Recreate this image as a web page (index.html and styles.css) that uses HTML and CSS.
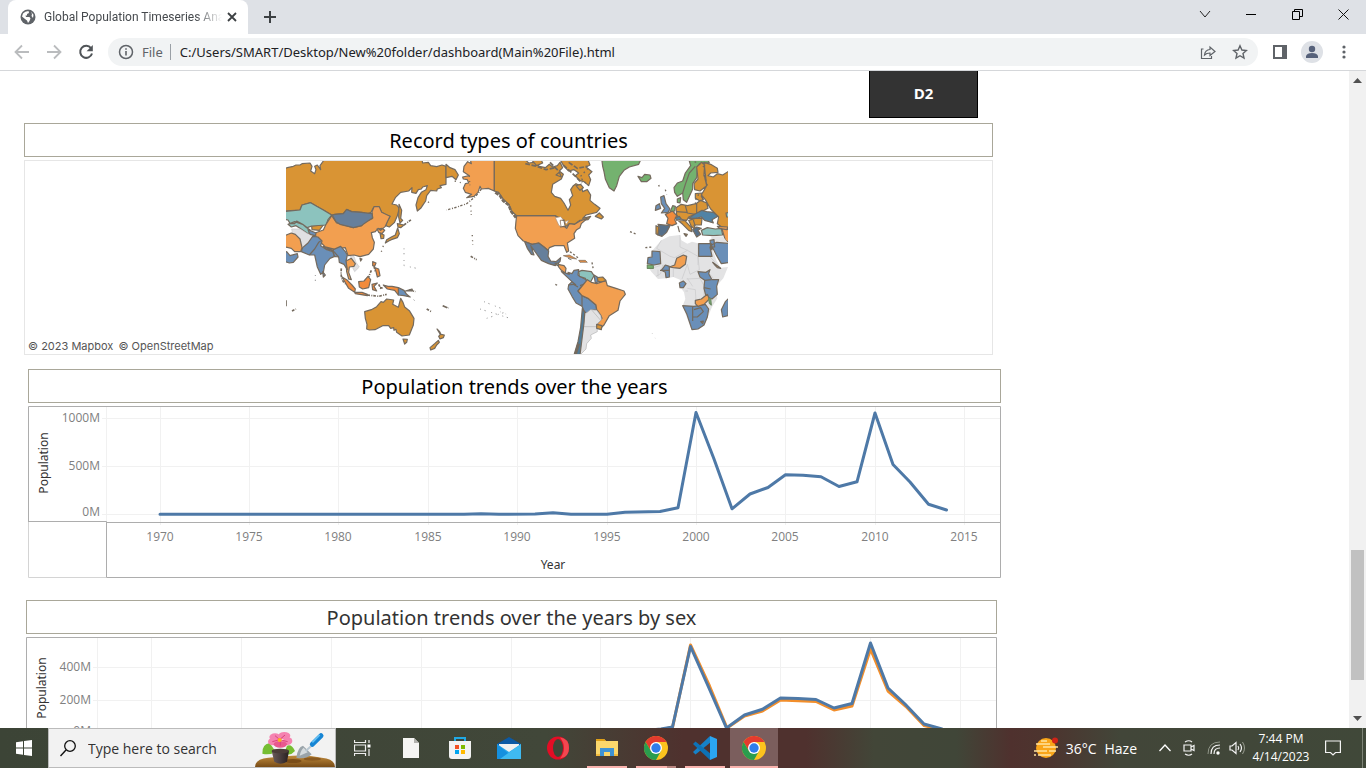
FILE: index.html
```html
<!DOCTYPE html>
<html lang="en">
<head>
<meta charset="utf-8">
<title>Global Population Timeseries Analysis</title>
<link rel="stylesheet" href="styles.css">
</head>
<body>
<div class="screen">
  <header class="tabstrip">
    <div class="tab">
      <svg class="tab-icon" viewBox="0 0 16 16"><circle cx="8" cy="8" r="7.500" fill="#5f6368"/><path d="M3 4.500Q5 2 8.500 2L9 4 7 5v1.500H5.500L6 8h3.500l1 1.500L9.500 12 8 14 7 11.500 5 10 2 7.500zM11 2.800l2.500 3-.5 3.200-1.500-2L12 5z" fill="#fff"/></svg>
      <span class="tab-title">Global Population Timeseries Analysis</span>
      <button class="icon-btn tab-close" aria-label="Close tab"><svg width="10" height="10" viewBox="0 0 10 10"><path d="M1 1l8 8M9 1L1 9" stroke="#3c4043" stroke-width="1.800"/></svg></button>
    </div>
    <button class="icon-btn new-tab" aria-label="New tab"><svg width="12" height="12" viewBox="0 0 12 12"><path d="M6 0v12M0 6h12" stroke="#3c4043" stroke-width="2"/></svg></button>
    <div class="window-controls">
      <button class="icon-btn" aria-label="Search tabs"><svg width="12" height="12" viewBox="0 0 12 12"><path d="M1 3l5 6 5-6" fill="none" stroke="#222"/></svg></button>
      <button class="icon-btn" aria-label="Minimize"><svg width="10" height="10" viewBox="0 0 10 10"><path d="M0 5.500h10" stroke="#000"/></svg></button>
      <button class="icon-btn" aria-label="Restore"><svg width="11" height="11" viewBox="0 0 11 11"><path d="M.5 2.500h7v8h-7zM2.500 2.500v-2h8v7h-3" fill="none" stroke="#000"/></svg></button>
      <button class="icon-btn" aria-label="Close window"><svg width="11" height="11" viewBox="0 0 11 11"><path d="M.5.5l10 10M10.500.5l-10 10" stroke="#111"/></svg></button>
    </div>
  </header>
  <nav class="toolbar">
    <button class="icon-btn nav-btn" aria-label="Back"><svg width="16" height="16" viewBox="0 0 16 16"><path d="M15 8H2M8 1.500L1.500 8 8 14.500" fill="none" stroke="#babcbe" stroke-width="1.800"/></svg></button>
    <button class="icon-btn nav-btn" aria-label="Forward"><svg width="16" height="16" viewBox="0 0 16 16"><path d="M1 8h13M8 1.500L14.500 8 8 14.500" fill="none" stroke="#babcbe" stroke-width="1.800"/></svg></button>
    <button class="icon-btn nav-btn" aria-label="Reload"><svg width="16" height="16" viewBox="0 0 16 16"><path d="M13 4.200A6 6 0 1 0 14 9.500" fill="none" stroke="#505458" stroke-width="2"/><path d="M14.800 1v6.200H8.600z" fill="#505458"/></svg></button>
    <div class="omnibox">
      <svg class="info" width="16" height="16" viewBox="0 0 16 16"><circle cx="8" cy="8" r="6.500" fill="none" stroke="#5f6368" stroke-width="1.500"/><path d="M8 7v4.500M8 4.200v1.600" stroke="#5f6368" stroke-width="1.600"/></svg>
      <label class="scheme" for="url">File</label>
      <input id="url" class="url" type="text" value="C:/Users/SMART/Desktop/New%20folder/dashboard(Main%20File).html">
      <button class="icon-btn box-btn" aria-label="Share"><svg width="16" height="16" viewBox="0 0 16 16"><path d="M3.500 5H1.500v9.500h10V12M4.500 11q.5-5 5.500-5.500V3l5 4.500-5 4V9Q6.500 9 4.500 11z" fill="none" stroke="#5f6368" stroke-width="1.200"/></svg></button>
      <button class="icon-btn box-btn" aria-label="Bookmark"><svg width="16" height="16" viewBox="0 0 16 16"><path d="M8 1.800l1.900 4.200 4.500.5L11 9.500l1 4.600-4-2.400-4 2.400 1-4.600-3.400-3 4.500-.5z" fill="none" stroke="#5f6368" stroke-width="1.400"/></svg></button>
    </div>
    <button class="icon-btn nav-btn" aria-label="Side panel"><svg width="14" height="14" viewBox="0 0 14 14"><path d="M1 1h12v12H1z" fill="none" stroke="#5f6368" stroke-width="2"/><path d="M9 1h4v12H9z" fill="#5f6368"/></svg></button>
    <button class="icon-btn nav-btn" aria-label="Profile"><svg width="22" height="22" viewBox="0 0 22 22"><circle cx="11" cy="11" r="11" fill="#dee1e6"/><circle cx="11" cy="8" r="3.200" fill="#56617a"/><path d="M5 17v-2q1-3 6-3t6 3v2z" fill="#56617a"/></svg></button>
    <button class="icon-btn nav-btn" aria-label="Menu"><svg width="4" height="14" viewBox="0 0 4 14"><g fill="#5f6368"><circle cx="2" cy="2" r="1.600"/><circle cx="2" cy="7" r="1.600"/><circle cx="2" cy="12" r="1.600"/></g></svg></button>
  </nav>

  <div class="viewport">
    <main class="page">
      <div class="nav-row"><button class="d2">D2</button></div>

      <section class="sheet sheet-map">
        <h2 class="sheet-title">Record types of countries</h2>
        <div class="map-box">
          <svg class="map" viewBox="18 18 1326 579" role="img" aria-label="World map of record types">
            <g stroke="#746a5e" stroke-width="3.600" stroke-linejoin="round">
              <g fill="#d99434">
                <path d="M10 10V42L22 38 40 34 48 30 60 30 66 26 90 24 96 34 92 48 104 56 108 44 104 34 112 30 122 44 120 32 130 18V10H425L428 24 445 22 452 32 470 35 486 30 498 34V88L480 92 484 98 472 102 470 108 452 106 440 122 437 138 430 148 422 160 412 168 408 150 414 128 424 112 438 104 442 92 428 96 424 102 415 104 408 115 395 112 396 98 386 108 362 112 346 128 336 147 350 150 358 160 352 182 343 203 328 216 317 212 322 198 330 184 318 180 305 172 295 155 281 157 273 172 260 178 245 172 215 170 200 164 190 176 165 178 155 180 130 165 110 154 92 143 66 150 60 165 10 168z"/>
                <path d="M498 28L510 38 525 44 535 60 528 74 516 64 498 68zM357 148L365 166 362 190 368 196 360 204 356 186zM95 213L130 210 118 226 96 224zM352 206L372 210 362 218 354 216zM353 219L358 236 352 248 334 254 326 258 316 264 320 254 334 246 346 240zM300 234L312 240 311 250 303 251z"/>
                <path d="M254 470L274 464 290 455 303 440 310 442 320 432 341 435 338 448 355 457 362 430 369 442 374 456 388 467 402 490 400 510 388 540 366 543 350 532 348 523 342 526 341 518 332 520 326 512 308 512 285 524 268 525 260 522 261 508 256 490zM369 552L382 553 380 562 374 567zM471 522L479 530 483 538 493 540 490 548 480 552 476 544 481 538zM475 556L478 562 470 570 464 580 452 585 450 578 464 566z"/>
              </g>
              <g fill="#8cc3be"><path d="M10 170L60 165 66 150 92 143 110 154 130 165 155 180 144 194 138 210 95 213 82 218 68 208 50 198 44 206 30 205 24 195 10 192zM24 208L44 200 68 208 80 218 90 224 86 238 60 220 48 212 34 216z"/></g>
              <g fill="#e0e0e2" stroke="#c9c9cb" stroke-width="2"><path d="M35 222L60 222 84 237 100 238 96 256 84 264 68 278 60 252 38 236zM210 304L222 304 228 322 238 336 224 350 218 338 226 330z"/></g>
              <path fill="#f29f50" d="M10 244L34 234 46 238 60 252 66 278 62 290 44 290 34 280 10 275zM105 234L130 225 137 210 155 182 170 204 220 218 245 212 252 202 278 190 276 170 282 155 298 155 305 172 330 184 322 200 316 214 302 226 294 220 286 230 274 233 277 248 283 262 280 282 266 298 240 305 222 300 204 302 196 278 178 280 165 288 138 278 118 258 108 246zM240 310L246 312 242 318zM198 318L214 310 226 326 222 334 208 336 206 352 214 374 206 372 200 350zM130 274L162 282 160 288 138 282zM291 222L306 220 314 226 306 236 296 232z"/>
              <path fill="#667f9b" d="M157 180L165 178 190 176 200 163 215 170 245 172 276 176 278 188 252 206 245 212 220 218 180 208 168 200z"/>
              <path fill="#6a8fb8" d="M64 290L68 278 84 264 98 244 114 246 126 258 122 272 140 284 158 290 164 304 150 310 134 330 130 352 122 358 112 336 104 300 88 300zM84 224L108 234 106 242 90 238zM128 350L136 360 130 366zM160 284L182 274 196 290 202 300 198 318 202 344 192 328 178 322 176 306 162 304zM10 292L20 290 30 302 52 296 54 306 40 322 28 324 10 318zM355 398L372 406 380 418 390 426 372 422 355 420zM376 408L396 402 398 408z"/>
              <path fill="none" d="M88 300L104 282 116 262 122 258M162 290L176 306"/>
              <path fill="#f28b3b" d="M186 366L200 374 216 390 226 402 224 412 206 400zM224 412L246 412 262 418 262 422 226 416zM236 380L252 378 264 364 272 374 266 398 248 402 238 396zM276 388L292 384 282 394 290 408 278 404zM310 390L324 394 336 394 355 398V420L344 406 322 402zM278 320L288 324 284 334 278 332zM284 338L296 342 300 362 292 366 288 350z"/>
              <path fill="#f29f50" d="M552 34L563 20 574 26 570 10H643V108L625 100 604 102 600 94 594 112 582 124 560 128 575 118 556 112 550 100 556 86 566 84 562 74 550 72 548 66 568 62 550 50z"/>
              <g fill="none" stroke-width="4" stroke-dasharray="7 4 3 5"><path d="M604 102L594 116 582 128 560 146 532 156 500 165"/></g>
              <g fill="none" stroke-width="4" stroke-dasharray="4 12 3 8 2 60"><path d="M310 272L304 290M444 140L452 148M524 78L546 84M568 62L580 306"/></g>
              <g fill="none" stroke-width="5" stroke-dasharray="8 4 3 3"><path d="M372 210L396 192M262 420L296 424 320 418M282 334L286 350M296 388L304 404M300 398L312 400M274 346L266 366M388 404L406 410M184 340Q180 380 200 388M440 462L454 470M36 468L48 462M572 304L590 314"/></g>
              <g fill="none" stroke="#9b9b9b" stroke-width="3" stroke-dasharray="3 11 4 17"><path d="M490 452L512 462M612 440L668 462M600 462L690 490M372 280L372 332 410 340M390 425L408 440M620 490L680 470M106 360V386"/></g>
              <path d="M488 452l14 6M18 436v18" stroke-width="5"/>
            </g>
            <g transform="translate(660)" stroke="#746a5e" stroke-width="3.600" stroke-linejoin="round">
              <path fill="#d99434" d="M-17 10H72L86 24 104 22 118 34 136 38 148 28 158 36 172 32 180 22 188 38 178 48 190 58 184 72 158 88 154 112 164 124 182 130 192 144 204 166 212 150 208 134 218 122 212 104 220 92 228 86 244 94 248 110 262 104 272 120 270 136 284 148 300 160 290 172 258 180 248 190 272 184 264 194 240 196 224 208 208 206 196 216 192 196 165 182 50 182 34 168 26 148 8 130 -4 112 -17 108z"/>
              <path fill="#d99434" d="M178 10H262L270 30 258 36 276 50 266 60 272 74 266 92 252 80 238 76 226 62 236 54 222 44 206 48 192 34zM168 60L178 52 184 66zM228 92L242 88 250 98 240 106zM286 184L298 174 310 186 304 192zM96 16L110 32 128 24 124 16z"/>
              <g stroke-width="8" fill="none"><path d="M-14 112L0 122 10 138 26 150 34 170 48 188" stroke-dasharray="12 3"/></g>
              <path fill="none" stroke-width="5" stroke-dasharray="14 5" d="M76 26L110 34 138 44 166 38M190 30L214 52 246 84M206 22L232 40 262 34M150 22L176 48"/>
              <path fill="#f29f50" d="M50 182H165L192 196 180 194 182 216 192 214 200 220 208 206 224 208 240 198 262 190 244 206 240 218 230 224 222 236 224 250 202 264 206 288 200 292 192 272 164 272 148 278 144 286 132 276 116 264 96 268 70 258 54 242 46 220 48 198z"/>
              <path fill="none" d="M50 182H165L192 196"/>
              <path fill="#fff" stroke="#aa8c74" stroke-width="2" d="M166 188L182 185 190 194 180 196 183 214 177 212zM194 200L206 196 200 208z"/>
              <path fill="#667f9b" d="M74 260L96 268 116 264 132 276 146 288 144 304 152 318 168 320 182 308 180 320 166 332 146 326 124 316 108 294 92 272 102 300 94 298 82 280z"/>
              <path fill="#f29f50" d="M174 328L192 332 198 340 196 354 184 346 176 336z"/><path fill="#8cc3be" d="M165 326L176 324 174 332z"/>
              <path fill="#6a8fb8" d="M184 350L208 358 204 352 216 356 222 346 236 344 234 360 258 374 262 384 244 396 234 408 246 422 264 430 288 450 290 464 272 466 260 476 252 468 246 454 228 444 216 424 204 402 206 390 216 380zM282 360L292 366 296 380 286 384z"/>
              <path fill="none" d="M206 390L220 388 234 396M216 380L228 390M246 422V454M262 384L240 392"/>
              <path fill="#8cc3be" d="M236 350L246 346 274 350 282 362 272 380 262 382 256 370 238 364z"/>
              <path fill="#d99434" d="M292 368L308 366 318 376 306 382 294 378z"/>
              <path fill="#f29f50" d="M234 408L244 396 262 374 274 382 290 386 308 380 318 378 322 392 348 400 372 408 376 418 360 438 354 466 328 482 312 510 304 518 290 508 306 490 302 480 290 464 288 450 264 430 246 422z"/>
              <path fill="#e2e2e3" stroke="#b4b4b4" stroke-width="2" d="M256 476L272 464 290 466 302 482 304 494 290 508 292 530 272 540 274 550 260 566 258 582 240 600 236 590 248 520zM246 515H288M276 466L302 496"/>
              <path fill="#d99434" d="M290 508L306 512 304 524 290 520z"/>
              <path fill="#4f7b98" d="M247 460L254 472 252 504 246 552 240 600H222L234 560 242 516z"/>
              <path d="M226 600L236 566" stroke-width="8"/>
              <path fill="#e28d45" d="M190 302L208 300 230 312 214 310zM236 316L256 316 262 322 240 322zM204 310L214 314z" stroke-width="2"/>
              <g fill="none" stroke-width="4" stroke-dasharray="6 6"><path d="M210 290L234 308M276 322L280 344M166 388L174 392M390 230L410 238M436 278L456 276"/></g>
              <g fill="#74b26f"><path d="M305 10H424L416 28 388 36 372 46 358 64 350 92 342 108 328 98 316 72 312 50 308 34z"/><path d="M414 64L426 68 434 58 450 60 453 70 440 80 424 80z"/><path d="M524 112L522 98 532 84 548 78 556 54 572 32 568 18 588 10H622L628 24 606 24 592 34 590 68 578 86 578 102 560 142 550 134 548 114 532 124zM532 132L542 128 540 144 532 142zM510 172L518 152 526 154 524 168z"/></g>
              <path fill="none" d="M548 114L556 88 568 54 586 34"/>
              <path fill="#d99434" d="M590 36L604 22 614 30 612 58 620 92 600 108 584 104 582 86 594 72zM612 22L632 28 652 40 654 52 632 54 624 62 640 66 652 56 668 60 684 50 690 50V222L668 218 652 206 656 186 632 162 616 134 604 120 620 92zM586 116L606 114 604 124 610 134 600 138 586 130zM528 158L544 148 562 152 588 146 602 136 620 144 624 160 608 168 584 178 566 186 560 196 540 192 530 180zM536 198L554 196 574 218 576 230 566 226 548 208zM552 236L562 238 558 244zM534 214L538 230zM566 196L586 190 606 190 604 210 582 210 586 224 574 214z"/>
              <path fill="#d99434" d="M468 212L476 216 474 240 468 236zM556 152L562 174 586 178M590 146V176M530 170L560 172M580 195L586 214"/>
              <path fill="#f28b3b" d="M496 178L518 168 530 182 524 194 530 206 516 212 500 206 504 190z"/>
              <path fill="#56708a" d="M474 208L510 212 500 232 486 244 474 240 478 218zM578 224L590 216 604 220 594 226 602 238 590 246z"/>
              <path fill="#5183a5" d="M566 190L584 178 606 166 620 170 640 172 654 184 636 194 640 204 628 200 614 196 604 186 586 190zM526 188L538 184 544 192 530 196z"/>
              <path fill="#6a8fb8" d="M482 126L492 122 498 146 510 162 504 172 484 174 494 160 484 146zM468 152L478 146 482 160 466 166z"/>
              <path fill="#8cc3be" d="M604 226L622 218 646 222 664 220 668 240 640 242 608 240zM678 174L690 172V186H680z"/>
              <path fill="#f29f50" d="M666 222L690 224V264L676 256zM652 214L684 216 680 224 658 220z"/>
              <path fill="#e3e3e4" stroke="none" d="M484 256L508 244 540 240 544 256 562 266 576 260 600 266 634 266 640 290 650 318 662 338 684 336 670 370 650 392 648 410 652 430 636 456 626 480 612 512 596 522 574 524 548 452 556 432 552 412 538 392 540 374 520 366 500 370 474 372 454 350 440 330 456 288zM634 244L668 244 684 264 634 270z"/>
              <path fill="none" stroke="#c9c9ca" stroke-width="2" d="M484 256L470 280 510 304 524 308 562 286 594 304 598 344 570 358 562 328M540 240V276L562 286M594 266V330M510 335L488 330 482 356 468 364M454 340L480 332M520 366V342M562 328L546 372M560 372L600 370 612 392V440M562 400L586 404 588 440 604 450M562 370L578 394M556 408H564M622 348L640 370M630 306L646 322M474 344V364"/>
              <path fill="#6a8fb8" d="M456 288L480 290 482 326 462 330 442 326 444 308 456 306zM596 266L634 266 636 284 630 276 636 304H596zM634 270L650 262 690 266V322L664 326 650 302zM594 350L618 352 630 344 626 356 636 374 656 374 650 394 652 418 636 432 618 424 612 400 614 376 600 366zM484 346L496 330 508 334 508 366 498 368 496 352zM538 384L550 378 558 386 550 398H540zM548 452L582 454 616 448 626 462 622 486 612 510 594 522 576 524 570 506 560 476zM686 430L676 440 664 464 668 486 684 482zM630 256L642 254 644 276 632 274z"/>
              <path fill="none" d="M578 456L578 498M582 464L602 458 610 470 592 486 578 486M614 376L634 374M612 398L632 402M480 346H508"/>
              <path fill="#f29f50" d="M508 336L524 330 530 310 550 300 560 304 556 328 540 340 520 338zM586 436L604 432 622 418 628 432 612 448 594 454 586 446zM638 322L662 340 652 338 646 332z"/>
              <path fill="#d99434" d="M602 500L610 498 608 506z"/>
              <path fill="#74b26f" stroke="#6c8a62" d="M442 330L460 332 460 340 442 340zM626 430L632 432 634 450 628 444z"/>
              <g fill="none" stroke-width="4" stroke-dasharray="5 9"><path d="M496 104L500 118M476 90L480 100M584 20L620 40M596 118L584 140 590 150M612 60L624 98M264 40L240 66 264 92"/></g>
              <path fill="none" stroke="#bbb" stroke-width="2" stroke-dasharray="3 14" d="M0 470L30 482M456 534L466 550"/>
            </g>
          </svg>
          <p class="credits"><a href="#mapbox">© 2023 Mapbox</a> <a href="#osm">© OpenStreetMap</a></p>
        </div>
      </section>

      <section class="sheet sheet-trend">
        <h2 class="sheet-title">Population trends over the years</h2>
        <svg class="chart" viewBox="28 406 973 172" role="img" aria-label="Population by year">
          <g class="grid"><path d="M106.500 407v115M160.500 407v118M249.500 407v118M338.500 407v118M428.500 407v118M517.500 407v118M607.500 407v118M696.500 407v118M785.500 407v118M875.500 407v118M964.500 407v118M102 418.500h898M102 466.500h898M102 514.500h898"/></g>
          <g class="frame"><path class="faint" d="M28.500 522V577.500H106"/><path d="M28.500 521V406.500H1000.500V577.500H106.500V521.500H28M106 522.500H1000"/></g>
          <path class="line blue" d="M160 514.300H464L481 513.800 499 514.300 535 514 553 512.800 571 514.200H607L625 512.300 660 511.500 678 507.800 696 412.500 714 459 732 508.800 750 494 768 487.500 785.500 474.800 803 475.300 821 476.800 839 486.500 857 481.800 875 413 893 464.500 910 482 928.500 504.300 946.500 510"/>
          <g class="tick" text-anchor="end"><text x="100" y="422">1000M</text><text x="100" y="470">500M</text><text x="100" y="516">0M</text></g>
          <g class="tick" text-anchor="middle"><text x="160" y="541">1970</text><text x="249" y="541">1975</text><text x="338" y="541">1980</text><text x="428" y="541">1985</text><text x="517" y="541">1990</text><text x="607" y="541">1995</text><text x="696" y="541">2000</text><text x="785" y="541">2005</text><text x="875" y="541">2010</text><text x="964" y="541">2015</text></g>
          <text class="axis" x="553" y="569" text-anchor="middle">Year</text>
          <text class="axis" transform="translate(48 463) rotate(-90)" text-anchor="middle">Population</text>
        </svg>
      </section>

      <section class="sheet sheet-sex">
        <h2 class="sheet-title soft">Population trends over the years by sex</h2>
        <svg class="chart" viewBox="26 637 971 160" role="img" aria-label="Population by year and sex">
          <g class="grid"><path d="M97.500 638v160M151.500 638v160M241.500 638v160M331.500 638v160M421.500 638v160M511.500 638v160M600.500 638v160M690.500 638v160M780.500 638v160M870.500 638v160M960.500 638v160M93 667.500h903M93 700.500h903M93 733.500h903"/></g>
          <g class="frame"><path d="M26.500 797V637.500H996.500V797"/></g>
          <path class="line orange" d="M151 733H620L661 729.500 672.500 727.500 690.500 645 709.500 686 727 728 744.500 716 762.500 711 780.500 700 816 701.500 834 710 852 706 870.500 649 888 691 906 706.500 924 725.500 942 730"/>
          <path class="line blue" d="M151 733H620L661 729 672.500 727 690.500 646.500 708.500 687 726.500 728 744.500 715 762.500 709.300 780.500 698 798 698.500 816 699.500 834 708 852 703.500 870.500 643 888 688 905 704 924 724 942 729"/>
          <g class="tick" text-anchor="end"><text x="91" y="671">400M</text><text x="91" y="704">200M</text><text x="91" y="735">0M</text></g>
          <text class="axis" transform="translate(46 688) rotate(-90)" text-anchor="middle">Population</text>
        </svg>
      </section>
    </main>
    <div class="scrollbar">
      <svg width="9" height="5" viewBox="0 0 9 5"><path d="M0 5L4.500 0 9 5z" fill="#505050"/></svg>
      <span class="thumb"></span>
      <svg width="9" height="5" viewBox="0 0 9 5"><path d="M0 0h9L4.500 5z" fill="#505050"/></svg>
    </div>
  </div>

  <footer class="taskbar">
    <button class="task start" aria-label="Start"><svg width="16" height="16" viewBox="0 0 16 16"><path d="M0 2.200L7 1.200V7.500H0zM8 1l8-1v7.500H8zM0 8.500h7v6.300l-7-1zM8 8.500h8V16l-8-1z" fill="#fff"/></svg></button>
    <div class="search">
      <label class="search-icon" for="search" aria-label="Search"><svg width="16" height="17" viewBox="0 0 16 17"><circle cx="10" cy="6" r="5.300" fill="none" stroke="#111" stroke-width="1.300"/><path d="M6 10L.5 16" stroke="#111" stroke-width="1.400"/></svg></label>
      <input id="search" class="search-input" type="text" placeholder="Type here to search">
      <svg class="garden" width="80" height="38" viewBox="0 0 240 114">
        <defs><linearGradient id="soil" x2="0" y2="1"><stop stop-color="#c08a3c"/><stop offset="1" stop-color="#784c16"/></linearGradient><linearGradient id="pot"><stop stop-color="#6b5b5b"/><stop offset="1" stop-color="#282020"/></linearGradient></defs>
        <path d="M0 114Q0 90 40 86L90 82Q150 76 200 86 240 90 240 114z" fill="url(#soil)"/>
        <ellipse cx="114" cy="96" rx="26" ry="6" fill="#7a4d18"/><ellipse cx="172" cy="90" rx="26" ry="5" fill="#8a5a20"/>
        <path d="M22 74Q20 46 44 42L62 68Q44 80 22 74zM120 66Q110 44 96 50L88 72Q104 84 120 66z" fill="#76bd32"/>
        <path d="M50 66Q76 58 102 66L96 98Q76 110 58 98z" fill="url(#pot)"/><ellipse cx="76" cy="66" rx="26" ry="7" fill="#4b3c38"/>
        <g fill="#f583b0"><ellipse cx="60" cy="24" rx="17" ry="11"/><ellipse cx="88" cy="20" rx="18" ry="11"/><ellipse cx="54" cy="38" rx="15" ry="11"/><ellipse cx="98" cy="36" rx="14" ry="12"/><ellipse cx="76" cy="46" rx="20" ry="10" fill="#e8588e"/></g><path d="M74 32L60 20M74 32L90 18M74 32L52 38M74 32L98 38M76 32V50" stroke="#d9447c" stroke-width="3"/><circle cx="74" cy="33" r="6" fill="#ffb21d"/>
        <path d="M124 86Q128 54 144 50L170 76Q152 92 124 86z" fill="#9aa4aa"/><path d="M134 80Q138 62 146 56L158 70z" fill="#d5dbde"/><path d="M152 66L172 48" stroke="#b9c8d3" stroke-width="6"/><path d="M172 46L198 20" stroke="#1685d4" stroke-width="15" stroke-linecap="round"/><path d="M172 40L194 18" stroke="#65c2f4" stroke-width="5"/>
      </svg>
    </div>
    <div class="apps">
      <button class="task" aria-label="Task view"><svg width="17" height="16" viewBox="0 0 17 16"><path d="M.5 0v2.500h11V0M.5 16v-2.500h11V16M.5 5h11v6H.5zM15 0v3M15 9v7" fill="none" stroke="#eee" stroke-width="1.200"/><path d="M13.500 4.500h3v3h-3z" fill="#fff"/></svg></button>
      <button class="task" aria-label="Document"><svg width="16" height="22" viewBox="0 0 16 22"><path d="M0 1h11l5 5v15H0z" fill="#f5f5f3"/><path d="M11 1v5h5z" fill="#b2b2ae"/></svg></button>
      <button class="task" aria-label="Microsoft Store"><svg width="24" height="24" viewBox="0 0 24 24"><path d="M7 6V2h10v4" fill="none" stroke="#20a9e4" stroke-width="2"/><path d="M1 5h22v15q0 3-3 3H4q-3 0-3-3z" fill="#f2f2f2"/><path d="M7 9h4v4H7z" fill="#f25022"/><path d="M13 9h4v4h-4z" fill="#7fba00"/><path d="M7 14h4v4H7z" fill="#00a4ef"/><path d="M13 14h4v4h-4z" fill="#ffb900"/></svg></button>
      <button class="task" aria-label="Mail"><svg width="24" height="22" viewBox="0 0 24 22"><path d="M0 7L12 0l12 7v7H0z" fill="#0c59a4"/><path d="M2 7h20v5l-10 6L2 12z" fill="#f0f0f0"/><path d="M0 7l12 8 12-8v15H0z" fill="#27a8ea"/><path d="M0 22V7l18 15z" fill="#1590df"/><path d="M24 7L3 22h21z" fill="#3fbaf1"/></svg></button>
      <button class="task" aria-label="Opera"><svg width="24" height="24" viewBox="0 0 24 24"><ellipse cx="12" cy="12" rx="11" ry="11.500" fill="#e30d25"/><path d="M14 1.500q9 1 9 10.500t-9 10.500q4-5 4-10.500t-4-10.500z" fill="#f24750"/><ellipse cx="12" cy="12" rx="5" ry="9" fill="#404637"/></svg></button>
      <button class="task running" aria-label="File Explorer"><svg width="22" height="20" viewBox="0 0 22 20"><path d="M0 1h8l2 2h12v15H0z" fill="#fbd76c"/><path d="M0 1h8l2 2H0z" fill="#dfa017"/><path d="M4 18v-8h14v8h-4v-4H8v4z" fill="#3f93d4"/><path d="M0 16h4v2H0zM18 16h4v2h-4z" fill="#f1b93d"/></svg></button>
      <button class="task running stacked" aria-label="Chrome"><svg width="24" height="24" viewBox="0 0 24 24"><circle cx="12" cy="12" r="12" fill="#fcc31e"/><path d="M1.600 6A12 12 0 0 1 22.400 6H12L7 15z" fill="#e33b2e"/><path d="M1.600 6A12 12 0 0 0 12 24L17 15 12 17 7 15z" fill="#2a9d4e"/><circle cx="12" cy="12" r="6" fill="#fff"/><circle cx="12" cy="12" r="4.700" fill="#2f7de9"/></svg></button>
      <button class="task running" aria-label="Visual Studio Code"><svg width="24" height="24" viewBox="0 0 24 24"><path d="M17 0L0 16l2.500 2.500L18 6z" fill="#1681c8"/><path d="M2.500 5.500L0 8l17 16 1-6z" fill="#0d72b7"/><path d="M17 0l7 3v18l-7 3z" fill="#2ba5f1"/></svg></button>
      <button class="task running active" aria-label="Chrome window"><svg width="24" height="24" viewBox="0 0 24 24"><circle cx="12" cy="12" r="12" fill="#fcc31e"/><path d="M1.600 6A12 12 0 0 1 22.400 6H12L7 15z" fill="#e33b2e"/><path d="M1.600 6A12 12 0 0 0 12 24L17 15 12 17 7 15z" fill="#2a9d4e"/><circle cx="12" cy="12" r="6" fill="#fff"/><circle cx="12" cy="12" r="4.700" fill="#2f7de9"/></svg></button>
    </div>
    <button class="weather"><svg width="24" height="22" viewBox="0 0 24 22"><circle cx="12" cy="11" r="10" fill="#f9a51a"/><path d="M2 7h14M7 4h6M9 10h15M0 14h13M15 14h7M4 18h13M0 18h2" stroke="#ffe4a0" stroke-width="1.700"/><circle cx="21" cy="3.500" r="3" fill="#cf2318"/></svg><span>36°C</span><span>Haze</span></button>
    <div class="tray">
      <button class="tray-btn" aria-label="Show hidden icons"><svg width="12" height="8" viewBox="0 0 12 8"><path d="M.5 7L6 1l5.500 6" fill="none" stroke="#fff" stroke-width="1.300"/></svg></button>
      <button class="tray-btn" aria-label="Meet now"><svg width="12" height="16" viewBox="0 0 12 16"><path d="M1 5h7v6H1zM8 7l3-1.500v5L8 9M2 2q4-2.500 7 0M2 14q4 2.500 7 0" fill="none" stroke="#f4f4f4" stroke-width="1.200"/></svg></button>
      <button class="tray-btn" aria-label="Network"><svg width="13" height="14" viewBox="0 0 13 14"><path d="M1 13Q1 1 13 1" fill="none" stroke="#909588"/><path d="M4 13q0-9 9-9M7 13q0-6 6-6" fill="none" stroke="#f4f4f4" stroke-width="1.200"/><circle cx="11" cy="12" r="1.700" fill="#fff"/></svg></button>
      <button class="tray-btn" aria-label="Volume"><svg width="17" height="14" viewBox="0 0 17 14"><path d="M1 5h2l4-3.500v11L3 9H1zM9 5q1.500 2 0 4M11 3q3 4 0 8" fill="none" stroke="#f4f4f4" stroke-width="1.200"/><path d="M13.500 1q4 6 0 12" fill="none" stroke="#9a9e91"/></svg></button>
      <button class="clock"><span>7:44 PM</span><span>4/14/2023</span></button>
      <button class="notice" aria-label="Notifications"><svg width="16" height="16" viewBox="0 0 16 16"><path d="M.6 1h14.800v11.500H10.500L8 15l-2.500-2.500H.6z" fill="none" stroke="#f4f4f4" stroke-width="1.200"/></svg></button>
    </div>
  </footer>
</div>
</body>
</html>
```

FILE: styles.css
```css
* { box-sizing: border-box; }

body {
  margin: 0;
  font-family: "Open Sans", "Noto Sans", sans-serif;
  background: #fff;
}

button {
  margin: 0;
  padding: 0;
  border: 0;
  background: none;
  font: inherit;
  color: inherit;
}

svg { display: block; flex: none; }

.screen {
  display: flex;
  flex-direction: column;
  height: 100vh;
  overflow: hidden;
}

.icon-btn {
  display: flex;
  align-items: center;
  justify-content: center;
}

/* Tab strip */
.tabstrip {
  display: flex;
  flex: none;
  height: 34px;
  padding-left: 8px;
  background: #dee1e6;
}

.tab {
  display: flex;
  align-items: center;
  width: 240px;
  padding: 0 10px 0 12px;
  background: #fff;
  border-radius: 8px 8px 0 0;
}

.tab-icon { width: 16px; height: 16px; }

.tab-title {
  flex: 1;
  margin-left: 8px;
  overflow: hidden;
  white-space: nowrap;
  font-family: Roboto, sans-serif;
  font-size: 12px;
  color: #45494d;
  mask-image: linear-gradient(90deg, #000 85%, transparent);
}

.tab-close { width: 12px; margin-left: 4px; }
.new-tab { width: 44px; }
.window-controls { display: flex; height: 28px; margin-left: auto; }
.window-controls .icon-btn { width: 46px; }

/* Toolbar */
.toolbar {
  display: flex;
  align-items: center;
  flex: none;
  height: 37px;
  padding: 0 6px;
  border-bottom: 1px solid #d5d7da;
}

.nav-btn { width: 32px; height: 28px; }

.omnibox {
  display: flex;
  align-items: center;
  flex: 1;
  height: 28px;
  margin-left: 6px;
  margin-right: 6px;
  padding: 0 2px 0 10px;
  border-radius: 14px;
  background: #f1f3f4;
}

.scheme {
  margin-left: 8px;
  padding-right: 7px;
  border-right: 1px solid #9aa0a6;
  font-family: "Noto Sans", sans-serif;
  font-size: 13px;
  line-height: 16px;
  color: #5f6368;
}

.url {
  flex: 1;
  min-width: 0;
  padding: 0 0 0 9px;
  border: 0;
  outline: 0;
  background: none;
  font-family: "Noto Sans", sans-serif;
  font-size: 13px;
  color: #202124;
}

.box-btn { width: 32px; height: 28px; }

/* Page */
.viewport { display: flex; flex: 1; min-height: 0; }

.page {
  flex: 1;
  min-width: 0;
  overflow: hidden;
}

.nav-row {
  display: flex;
  justify-content: flex-end;
  margin: 0 371px 5px 24px;
}

.d2 {
  width: 109px;
  height: 47px;
  padding-bottom: 2px;
  border: 1px solid #000;
  border-top: 0;
  background: #333;
  color: #fff;
  font-size: 15px;
  font-weight: 700;
}

.sheet { display: flex; flex-direction: column; gap: 3px; }
.sheet-map { margin: 0 356px 14px 24px; }
.sheet-trend { margin: 0 348px 22px 28px; }
.sheet-sex { margin: 0 352px 0 26px; }

.sheet-title {
  margin: 0;
  padding-top: 2px;
  border: 1px solid #a9a799;
  font-family: "Noto Sans", sans-serif;
  font-size: 20px;
  font-weight: 400;
  line-height: 30px;
  text-align: center;
  color: #000;
}

.sheet-title.soft { color: #333; }

.map-box {
  position: relative;
  padding-right: 4px;
  border: 1px solid #e6e6e6;
}

.map {
  width: 442px;
  height: 193px;
  margin: 0 auto;
  overflow: hidden;
}

.credits {
  position: absolute;
  left: 3px;
  bottom: 0;
  margin: 0;
  font: 11px/16px Inter, sans-serif;
  color: #555;
}

.credits a { margin-right: 2px; color: inherit; text-decoration: none; }

.chart { width: 100%; height: auto; }
.grid { fill: none; stroke: #f1f1f1; }
.frame { fill: none; stroke: #adadad; }
.frame .faint { stroke: #d4d4d4; }
.line { fill: none; stroke-width: 3; stroke-linejoin: round; stroke-linecap: round; }
.blue { stroke: #4e79a7; }
.orange { stroke: #f28e2b; }
.tick { font: 12px "Open Sans", sans-serif; fill: #808080; }
.axis { font: 12px "Noto Sans", sans-serif; fill: #333; }

.scrollbar {
  display: flex;
  flex-direction: column;
  align-items: center;
  justify-content: space-between;
  width: 17px;
  padding: 7px 0;
  background: #f1f1f1;
}

.thumb {
  width: 13px;
  height: 130px;
  margin-top: 467px;
  margin-bottom: auto;
  background: #c1c1c1;
}

/* Taskbar */
.taskbar {
  display: flex;
  flex: none;
  height: 40px;
  color: #fff;
  background: linear-gradient(90deg, #3c4436 0, #414739 40%, #4f312e 50%, #4f312e 59%, #424638 64%, #404638 70%, #4f312e 74%, #4c352f 77%, #424639 82%, #404839 100%);
}

.task {
  position: relative;
  display: flex;
  align-items: center;
  justify-content: center;
  width: 48px;
  height: 40px;
}

.search {
  display: flex;
  align-items: center;
  width: 288px;
  padding-left: 11px;
  border: 1px solid #bbb;
  background: #f2f2f2;
}

.search-input {
  flex: 1;
  min-width: 0;
  padding: 0 0 0 12px;
  border: 0;
  outline: 0;
  background: none;
  font-family: inherit;
  font-size: 14px;
}

.search-input::placeholder { color: #333; opacity: 1; }

.apps { display: flex; gap: 1px; margin-left: 2px; }

.running::after {
  content: "";
  position: absolute;
  left: 4px;
  right: 4px;
  bottom: 0;
  height: 2px;
  background: #f9b2ad;
}

.stacked::after { background: linear-gradient(90deg, #f9b2ad 78%, #b98580 78%); }
.active { background: #7b5e5d; }
.active::after { left: 0; right: 0; }

.weather {
  display: flex;
  align-items: center;
  gap: 8px;
  margin-left: auto;
  font-size: 14px;
}

.tray {
  display: flex;
  align-items: center;
  margin-left: 16px;
  margin-right: 3px;
  border-right: 1px solid #7d8376;
}

.tray-btn {
  display: flex;
  align-items: center;
  justify-content: center;
  width: 24px;
  height: 40px;
}

.clock {
  display: flex;
  flex-direction: column;
  width: 64px;
  text-align: center;
  font-size: 12px;
  line-height: 18px;
}

.notice {
  display: flex;
  align-items: center;
  justify-content: center;
  width: 40px;
  height: 40px;
  margin-right: 9px;
}
```
